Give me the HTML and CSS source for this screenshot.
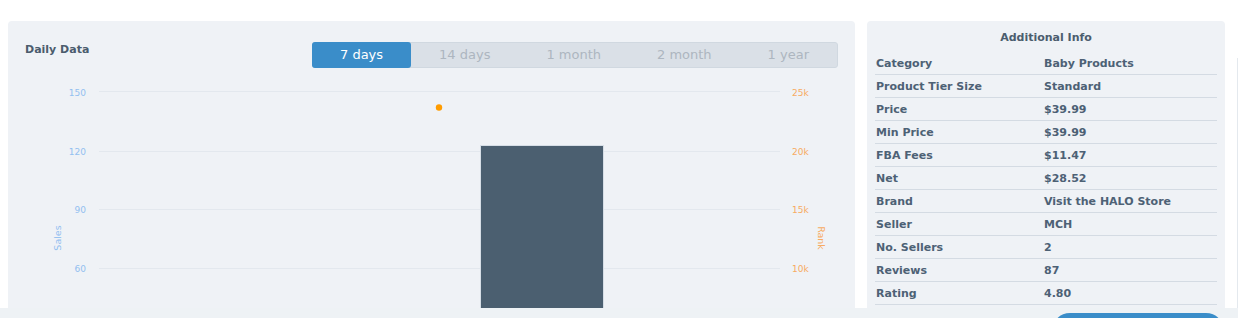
FILE: index.html
```html
<!DOCTYPE html>
<html>
<head>
<meta charset="utf-8">
<link rel="stylesheet" href="styles.css">
</head>
<body>
<div class="page">
  <div class="content">
    <section class="panel chart-panel">
      <div class="chart-head">
        <h2 class="title">Daily Data</h2>
        <div class="tabs">
          <span class="tab active">7 days</span>
          <span class="tab">14 days</span>
          <span class="tab">1 month</span>
          <span class="tab">2 month</span>
          <span class="tab">1 year</span>
        </div>
      </div>
      <svg class="chart" width="813" height="240" viewBox="0 0 813 240">
        <g stroke="#e3e8ee" stroke-width="1">
          <line x1="74" y1="19.5" x2="755" y2="19.5"/>
          <line x1="74" y1="79.5" x2="755" y2="79.5"/>
          <line x1="74" y1="137.5" x2="755" y2="137.5"/>
          <line x1="74" y1="196.5" x2="755" y2="196.5"/>
        </g>
        <g class="axl" text-anchor="end">
          <text x="61" y="24">150</text>
          <text x="61" y="83">120</text>
          <text x="61" y="141">90</text>
          <text x="61" y="200">60</text>
        </g>
        <g class="axr" text-anchor="start">
          <text x="767" y="24">25k</text>
          <text x="767" y="83">20k</text>
          <text x="767" y="141">15k</text>
          <text x="767" y="200">10k</text>
        </g>
        <text class="axl axt" transform="translate(35.5 166) rotate(-90)" text-anchor="middle">Sales</text>
        <text class="axr axt" transform="translate(792.5 166) rotate(90)" text-anchor="middle">Rank</text>
        <rect x="455.5" y="73.5" width="123" height="200" fill="#4b5f70" stroke="#d6dee6" stroke-width="1"/>
        <circle cx="414" cy="35.5" r="3.2" fill="#ff9c00"/>
      </svg>
    </section>
    <section class="panel info-panel">
      <h3 class="info-title">Additional Info</h3>
      <dl class="info">
        <div class="row"><dt>Category</dt><dd>Baby Products</dd></div>
        <div class="row"><dt>Product Tier Size</dt><dd>Standard</dd></div>
        <div class="row"><dt>Price</dt><dd>$39.99</dd></div>
        <div class="row"><dt>Min Price</dt><dd>$39.99</dd></div>
        <div class="row"><dt>FBA Fees</dt><dd>$11.47</dd></div>
        <div class="row"><dt>Net</dt><dd>$28.52</dd></div>
        <div class="row"><dt>Brand</dt><dd>Visit the HALO Store</dd></div>
        <div class="row"><dt>Seller</dt><dd>MCH</dd></div>
        <div class="row"><dt>No. Sellers</dt><dd>2</dd></div>
        <div class="row"><dt>Reviews</dt><dd>87</dd></div>
        <div class="row"><dt>Rating</dt><dd>4.80</dd></div>
      </dl>
    </section>
    <div class="edge"></div>
  </div>
  <div class="footer">
    <button class="action" type="button"></button>
  </div>
</div>
</body>
</html>
```
FILE: styles.css
```css
* { box-sizing: border-box; }
html, body { margin: 0; padding: 0; background: #ffffff; }
body { font-family: "DejaVu Sans", "Liberation Sans", sans-serif; color: #4b5d6e; }

.page { height: 318px; overflow: hidden; display: flex; flex-direction: column; }

.content {
  height: 308px;
  flex: none;
  display: flex;
  gap: 12px;
  padding: 21px 0 0 8px;
  overflow: hidden;
}

.panel {
  background: #eff2f6;
  border-radius: 4px 4px 0 0;
  overflow: hidden;
}

.chart-panel { width: 847px; flex: none; padding: 21px 17px 0 17px; }

.chart-head { display: flex; justify-content: space-between; align-items: flex-start; height: 26px; }

.title {
  margin: 0;
  font-size: 11px;
  font-weight: bold;
  line-height: 14px;
  color: #4b5c6d;
  padding-top: 1px;
}

.tabs {
  width: 526px;
  height: 26px;
  display: flex;
  background: #dae0e7;
  border: 1px solid #d0d8e0;
  border-radius: 3px;
}

.tab {
  flex: 1 1 auto;
  text-align: center;
  font-size: 13px;
  line-height: 24px;
  color: #adb6c0;
  white-space: nowrap;
}

.tab.active {
  background: #3a8dc9;
  color: #ffffff;
  border-radius: 3px;
  margin: -1px 0 -1px -1px;
  line-height: 26px;
}

.chart { display: block; margin-top: 4px; }
.axl { font-family: "DejaVu Sans", sans-serif; font-size: 9px; fill: #93c0f0; }
.axr { font-family: "DejaVu Sans", sans-serif; font-size: 9px; fill: #f7ab62; }
.axt { font-size: 9.5px; }

.info-panel { width: 358px; flex: none; padding: 0 8px; }

.info-title {
  margin: 0;
  height: 31px;
  line-height: 31px;
  padding-top: 1px;
  text-align: center;
  font-size: 11px;
  font-weight: bold;
  color: #4b5d6e;
}

.info { margin: 0; }

.row {
  display: grid;
  grid-template-columns: 169px 1fr;
  height: 23px;
  border-bottom: 1px solid #d4dbe3;
  align-items: center;
}

.row dt, .row dd {
  margin: 0;
  padding-top: 1px;
  font-size: 11px;
  font-weight: bold;
  line-height: 21px;
  color: #4d6175;
  white-space: nowrap;
}

.row dt { padding-left: 1px; }

.edge {
  flex: 1;
  margin-top: 37px;
  border-left: 1px solid #e4e9ee;
}

.footer {
  height: 10px;
  flex: none;
  background: #eef2f5;
  overflow: hidden;
  padding: 5px 0 0 1052px;
}

.action {
  display: block;
  width: 172px;
  height: 36px;
  border: 0;
  border-radius: 18px;
  background: #3a8dc9;
  padding: 0;
}
```
